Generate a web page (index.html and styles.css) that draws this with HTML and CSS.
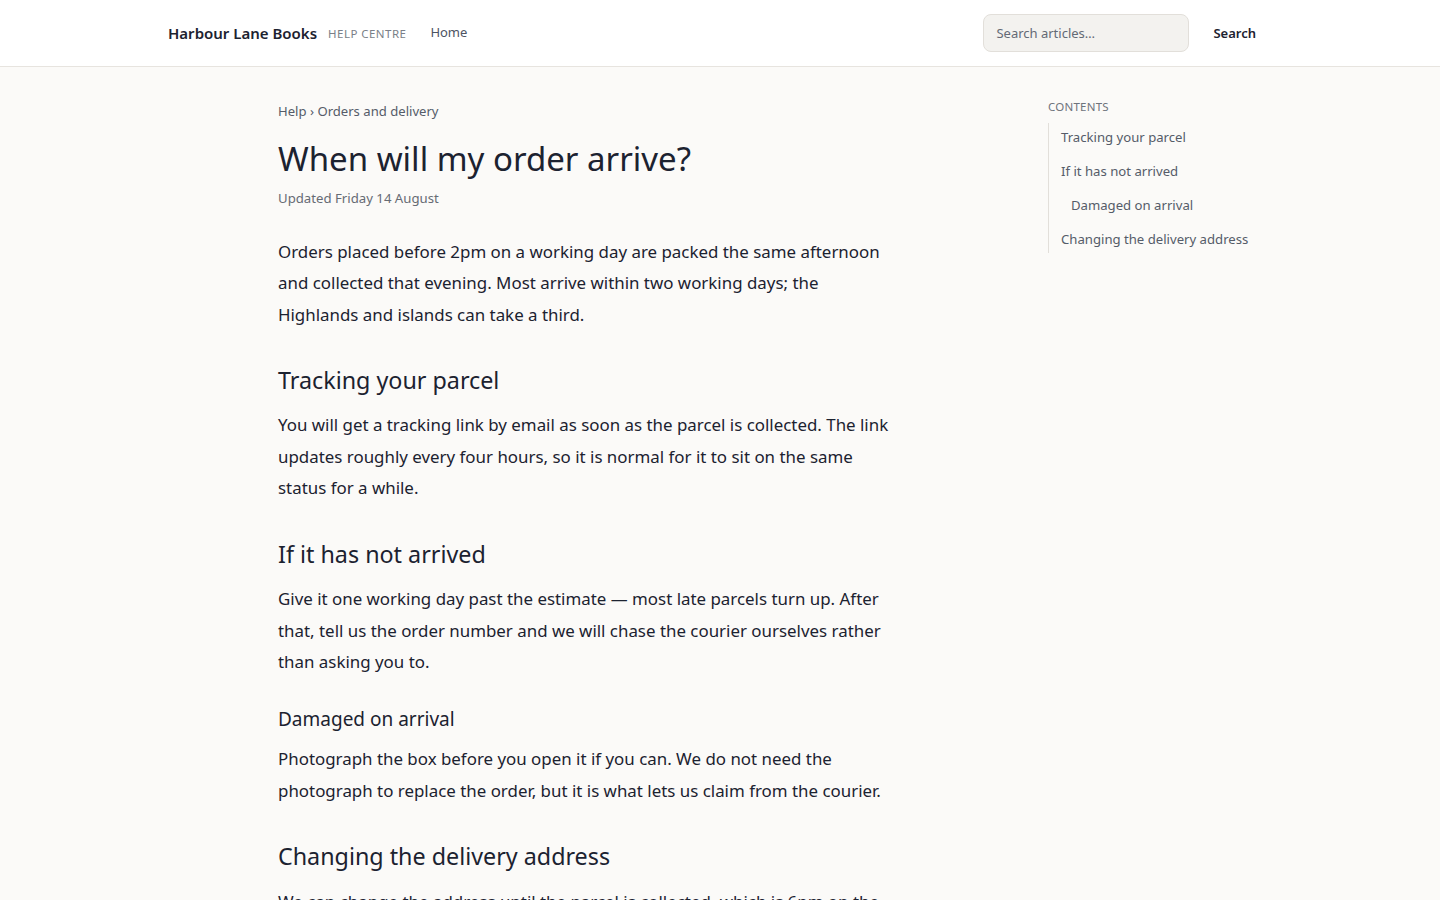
FILE: index.html
```html
<!DOCTYPE html>
<html lang="en">
<head>
<meta charset="utf-8">
<title>When will my order arrive? – Harbour Lane Books Help Centre</title>
<link rel="stylesheet" href="styles.css">
</head>
<body>
<header class="site-header">
  <div class="header-inner">
    <div class="brand-group">
      <a class="brand" href="#">Harbour Lane Books</a>
      <span class="brand-tag">Help Centre</span>
      <nav class="main-nav"><a href="#">Home</a></nav>
    </div>
    <form class="search-form">
      <input class="search-input" type="text" placeholder="Search articles…">
      <button class="search-button" type="button">Search</button>
    </form>
  </div>
</header>

<main class="page">
  <article class="article">
    <nav class="breadcrumb"><a href="#">Help</a> › <a href="#">Orders and delivery</a></nav>
    <h1 class="article-title">When will my order arrive?</h1>
    <p class="article-meta">Updated Friday 14 August</p>

    <p class="lead">Orders placed before 2pm on a working day are packed the same afternoon and collected that evening. Most arrive within two working days; the Highlands and islands can take a third.</p>

    <h2 id="tracking">Tracking your parcel</h2>
    <p>You will get a tracking link by email as soon as the parcel is collected. The link updates roughly every four hours, so it is normal for it to sit on the same status for a while.</p>

    <h2 id="not-arrived">If it has not arrived</h2>
    <p>Give it one working day past the estimate — most late parcels turn up. After that, tell us the order number and we will chase the courier ourselves rather than asking you to.</p>

    <h3 id="damaged">Damaged on arrival</h3>
    <p>Photograph the box before you open it if you can. We do not need the photograph to replace the order, but it is what lets us claim from the courier.</p>

    <h2 id="address">Changing the delivery address</h2>
    <p>We can change the address until the parcel is collected, which is 6pm on the day it is packed. After that it is with the courier and only they can redirect it.</p>
  </article>

  <aside class="toc">
    <p class="toc-title">Contents</p>
    <ul class="toc-list">
      <li><a href="#tracking">Tracking your parcel</a></li>
      <li><a href="#not-arrived">If it has not arrived</a></li>
      <li class="toc-sub"><a href="#damaged">Damaged on arrival</a></li>
      <li><a href="#address">Changing the delivery address</a></li>
    </ul>
  </aside>
</main>
</body>
</html>
```

FILE: styles.css
```css
* { box-sizing: border-box; }

html, body {
  margin: 0;
  padding: 0;
}

body {
  font-family: "Noto Sans", "Open Sans", sans-serif;
  color: #1c2230;
  background: #fbfaf8;
}

a {
  color: inherit;
  text-decoration: none;
}

/* Header bar */
.site-header {
  background: #ffffff;
  border-bottom: 1px solid #e7e4df;
}

.header-inner {
  max-width: 1104px;
  margin: 0 auto;
  height: 66px;
  display: flex;
  align-items: center;
  justify-content: space-between;
}

.brand-group {
  display: flex;
  align-items: center;
}

.brand {
  font-size: 15px;
  font-weight: 600;
  color: #1c2230;
}

.brand-tag {
  margin-left: 11px;
  font-size: 11.5px;
  letter-spacing: 0.04em;
  text-transform: uppercase;
  color: #7a7f88;
}

.main-nav {
  margin-left: 24px;
  margin-top: -2px;
  font-size: 13px;
  color: #4d5463;
}

.search-form {
  display: flex;
  align-items: center;
  gap: 8px;
}

.search-input {
  width: 206px;
  height: 38px;
  padding: 0 12px;
  font: inherit;
  font-size: 13px;
  color: #1c2230;
  background: #f3f2ef;
  border: 1px solid #e2dfda;
  border-radius: 8px;
  outline: none;
}

.search-input::placeholder {
  color: #646a75;
}

.search-button {
  font: inherit;
  font-size: 13px;
  font-weight: 600;
  color: #1c2230;
  background: none;
  border: 0;
  padding: 8px 16px;
  cursor: pointer;
}

/* Page body: article column plus contents rail */
.page {
  max-width: 1104px;
  margin: 0 auto;
  display: grid;
  grid-template-columns: minmax(0, 1fr) 224px;
  column-gap: 40px;
  padding-top: 34px;
}

.article {
  width: 622px;
  margin: 0 auto 0 110px;
}

.breadcrumb {
  font-size: 13.1px;
  line-height: 20px;
  color: #555c69;
}

.article-title {
  margin: 18px 0 0;
  font-size: 33px;
  font-weight: 400;
  line-height: 39.6px;
  color: #1c2230;
}

.article p {
  margin: 0;
  font-size: 16.9px;
  line-height: 31.5px;
}

.article .article-meta {
  margin-top: 9px;
  font-size: 13.2px;
  line-height: 20px;
  color: #666b74;
}

.article .lead {
  margin-top: 28px;
}

.article h2 {
  margin: 35px 0 14px;
  font-size: 23.3px;
  font-weight: 400;
  line-height: 30.3px;
}

.article h3 {
  margin: 29px 0 12px;
  font-size: 19px;
  font-weight: 400;
  line-height: 24.7px;
}

/* Contents rail */
.toc-title {
  margin: -2px 0 0;
  font-size: 11.5px;
  line-height: 16px;
  letter-spacing: 0.02em;
  text-transform: uppercase;
  color: #6e737c;
}

.toc-list {
  list-style: none;
  margin: 8px 0 0;
  padding: 0;
  display: flex;
  flex-direction: column;
  gap: 6px;
  border-left: 1px solid #e2dfda;
}

.toc-list li {
  padding: 4px 0 4px 12px;
  font-size: 13.15px;
  line-height: 20px;
  color: #555c69;
}

.toc-list .toc-sub {
  padding-left: 22px;
}
```
